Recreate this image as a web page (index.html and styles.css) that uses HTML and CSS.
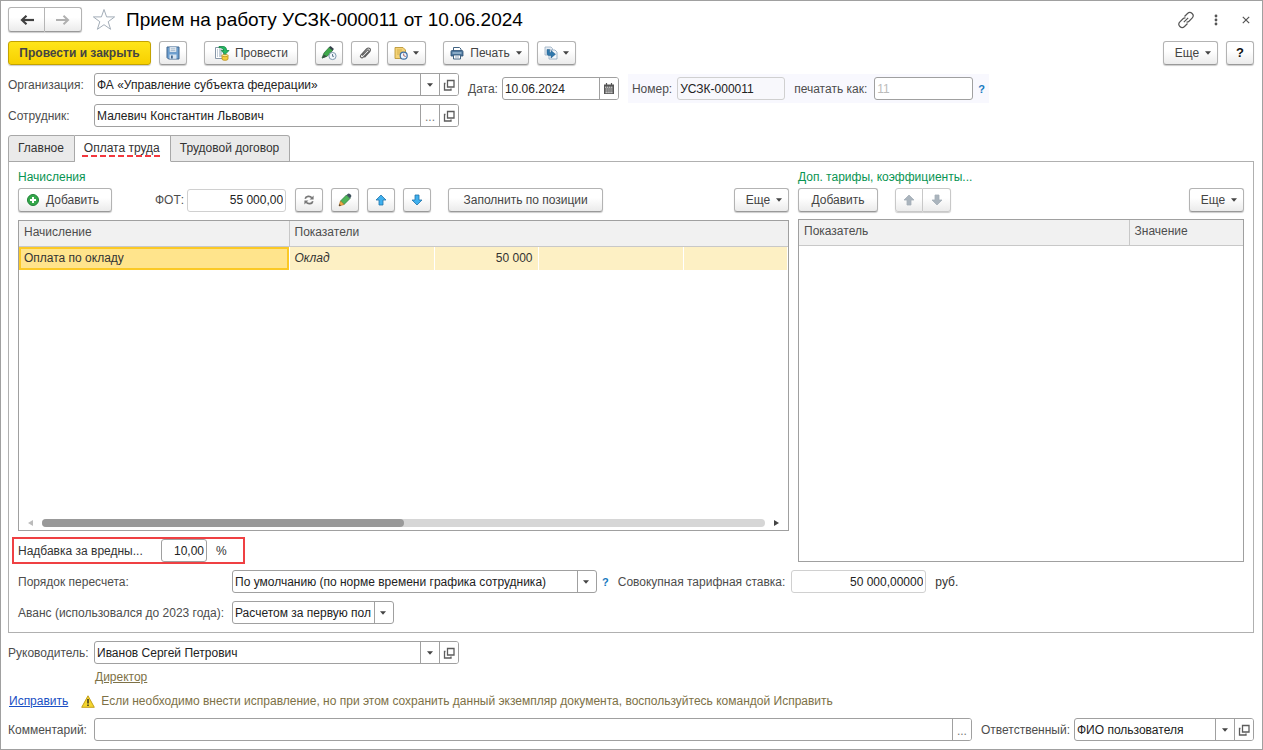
FILE: index.html
```html
<!DOCTYPE html>
<html lang="ru">
<head>
<meta charset="utf-8">
<meta name="viewport" content="width=device-width, initial-scale=1">
<title>Прием на работу УСЗК-000011 от 10.06.2024</title>
<link rel="stylesheet" href="styles.css">
</head>
<body>
<svg class="sprite" aria-hidden="true">
  <symbol id="caret" viewBox="0 0 7 4"><path d="M0 0h7L3.500 4z" fill="currentColor"/></symbol>
  <symbol id="open" viewBox="0 0 12 12"><path d="M4.500 1.500h6.500v6.500H4.500zM2.500 4.500H1.500V11H8V9.500" fill="none" stroke="#5c5c5c" stroke-width="1.300"/></symbol>
  <symbol id="up" viewBox="0 0 12 12"><path d="M6 1L11 6H8v5H4V6H1z" fill="currentColor" stroke="var(--edge)" stroke-width=".8" stroke-linejoin="round"/></symbol>
  <symbol id="down" viewBox="0 0 12 12"><path d="M6 11L1 6h3V1h4v5h3z" fill="currentColor" stroke="var(--edge)" stroke-width=".8" stroke-linejoin="round"/></symbol>
</svg>
<main class="window">
  <header class="title-row">
    <div class="pair nav">
      <button class="btn" aria-label="Назад"><svg width="14" height="10" viewBox="0 0 14 10"><path d="M14 5H3" stroke="#404040" stroke-width="2.200"/><path d="M6.500.8L2 5l4.500 4.200" fill="none" stroke="#404040" stroke-width="2.200"/></svg></button>
      <button class="btn" aria-label="Вперед"><svg width="14" height="10" viewBox="0 0 14 10"><path d="M0 5h11" stroke="#b0b0b0" stroke-width="2"/><path d="M7.500.8L12 5L7.500 9.200" fill="none" stroke="#b0b0b0" stroke-width="2"/></svg></button>
    </div>
    <button class="bare star" aria-label="В избранное"><svg width="24" height="23" viewBox="0 0 24 23"><path d="M12 1.500l2.600 7.400h8l-6.400 4.800 2.400 7.600L12 16.700l-6.600 4.600 2.400-7.600L1.400 8.900h8z" fill="#fff" stroke="#a3adb8"/></svg></button>
    <h1>Прием на работу УСЗК-000011 от 10.06.2024</h1>
    <div class="window-tools">
      <button class="bare" aria-label="Ссылка"><svg width="18" height="18" viewBox="0 0 18 18" fill="none" stroke="#555" stroke-width="1.200"><path d="M7.500 5.500L10.500 2.500a3.200 3.200 0 0 1 4.600 4.600L12 10.200a3 3 0 0 1-2.500.8M10.500 12.500l-3 3a3.200 3.200 0 0 1-4.600-4.600L6 7.800a3 3 0 0 1 2.500-.8M6.800 11.200l4.400-4.400"/></svg></button>
      <button class="bare" aria-label="Меню"><svg width="4" height="12" viewBox="0 0 4 12" fill="#555"><circle cx="2" cy="2" r="1.400"/><circle cx="2" cy="6" r="1.400"/><circle cx="2" cy="10" r="1.400"/></svg></button>
      <button class="bare" aria-label="Закрыть"><svg width="8" height="8" viewBox="0 0 8 8"><path d="M.8.8l6.400 6.400M7.200.8L.8 7.200" stroke="#555" stroke-width="1.200"/></svg></button>
    </div>
  </header>

  <div class="toolbar">
    <div class="group">
      <button class="btn primary">Провести и закрыть</button>
      <button class="btn icon" aria-label="Записать"><svg width="14" height="14" viewBox="0 0 14 14"><path d="M1 1h12v12H2.500L1 11.500z" fill="#6d9fd0" stroke="#41668f"/><path d="M3.500 1h7v5h-7z" fill="#fff" stroke="#7d9fc0" stroke-width=".6"/><path d="M4.500 2.800h5M4.500 4.300h5" stroke="#7190b0" stroke-width=".7"/><path d="M3.500 8.500h7v4.300h-7z" fill="#d8e4f0"/><path d="M5 9.500h1.800v3H5z" fill="#41668f"/></svg></button>
    </div>
    <div class="group">
      <button class="btn post"><svg width="16" height="16" viewBox="0 0 16 16"><path d="M1.500 2.500h8v11h-8z" fill="#fff" stroke="#8797a8"/><path d="M3 5h1M5 5h3M3 7h1M5 7h3M3 9h1M5 9h3M3 11h1M5 11h3" stroke="#7c93aa" stroke-width=".9"/><path d="M8 10.500v3.500c0 1.700 6 1.700 6 0v-3.500z" fill="#f5ce3c" stroke="#b88b16" stroke-width=".8"/><ellipse cx="11" cy="10.500" rx="3" ry="1.200" fill="#ffe98a" stroke="#b88b16" stroke-width=".7"/><path d="M5 1.500h4c2.500 0 3.500 1.500 3.500 4H15L11 9.500 7.300 5.500h2.200C9.500 3 7 2.800 5 2.800z" fill="#25ba62" stroke="#138243" stroke-width=".8"/></svg>Провести</button>
    </div>
    <div class="group">
      <button class="btn icon" aria-label="Подписать"><svg width="16" height="16" viewBox="0 0 16 16"><path d="M1 13l2-5 5.500-6L12 5 6.500 11z" fill="#3ea94a" stroke="#276a35" stroke-width=".7"/><path d="M8 2.500L9.500 1 13 4l-1.500 1.600z" fill="#34414b"/><path d="M1 13.500l1.800-4L6 11.500z" fill="#385044"/><circle cx="11.500" cy="11" r="3.600" fill="#f1f6fa" stroke="#7f99ae"/><path d="M11.500 9v2.300H13" fill="none" stroke="#557086" stroke-width=".9"/></svg></button>
      <button class="btn icon" aria-label="Файлы"><svg width="14" height="14" viewBox="0 0 14 14"><path d="M4.200 9.500l5-5.200c1-1 2.400.2 1.500 1.300l-5.400 5.600c-1.700 1.700-4-.3-2.400-2.200L8.500 3c2.300-2.300 5.300.2 3.300 2.600L6.500 11.300" fill="none" stroke="#5d5d5d" stroke-width="1.100"/></svg></button>
      <button class="btn menu-icon" aria-label="Напоминания"><svg width="14" height="14" viewBox="0 0 14 14"><path d="M1 1.500h8l2.500 2.500v8.500H1z" fill="#f5d376" stroke="#bb9738" stroke-width=".9"/><path d="M3 4h5M3 6h6M3 8h3" stroke="#cba844" stroke-width=".8"/><circle cx="9.700" cy="9.700" r="3.500" fill="#edf5fd" stroke="#3e6fa5" stroke-width="1.200"/><path d="M9.700 7.500v2.200l2 .8" fill="none" stroke="#a75f60"/></svg><svg class="caret"><use href="#caret"/></svg></button>
    </div>
    <div class="group">
      <button class="btn print"><svg width="14" height="14" viewBox="0 0 14 14"><path d="M3.500 5V1.500h6L11 3v2" fill="#fff" stroke="#416382"/><path d="M1 5.500q0-1 1-1h10q1 0 1 1V10H1z" fill="#4d789f" stroke="#2e5275" stroke-width=".8"/><path d="M2.500 7h9" stroke="#c6dced"/><path d="M3.500 9h7v4h-7z" fill="#fff" stroke="#416382"/><path d="M5 11h4" stroke="#96abc0"/></svg>Печать<svg class="caret"><use href="#caret"/></svg></button>
      <button class="btn menu-icon" aria-label="Создать на основании"><svg width="14" height="14" viewBox="0 0 14 14"><path d="M1 1h6l1.500 1.500V9H1z" fill="#e6edf4" stroke="#9aafc3" stroke-width=".8"/><path d="M5 4h6l2 2v7H5z" fill="#f5f8fb" stroke="#8ba4bc" stroke-width=".8"/><path d="M3 3.500h2.500V6.500H7V4.500L11.500 8.200L7 12V9.500H5Q3 9.500 3 7.500z" fill="#3079ad" stroke="#205b88" stroke-width=".5"/></svg><svg class="caret"><use href="#caret"/></svg></button>
    </div>
    <div class="group push">
      <button class="btn more">Еще<svg class="caret"><use href="#caret"/></svg></button>
      <button class="btn icon help" aria-label="Справка">?</button>
    </div>
  </div>

  <div class="head-fields">
    <div class="stack">
      <div class="row">
        <label class="caption" for="org">Организация:</label>
        <div class="field wide"><input id="org" value="ФА «Управление субъекта федерации»"><button aria-label="Выбрать"><svg class="caret"><use href="#caret"/></svg></button><button aria-label="Открыть"><svg class="open"><use href="#open"/></svg></button></div>
      </div>
      <div class="row">
        <label class="caption" for="emp">Сотрудник:</label>
        <div class="field wide"><input id="emp" value="Малевич Константин Львович"><button class="dots" aria-label="Выбрать">...</button><button aria-label="Открыть"><svg class="open"><use href="#open"/></svg></button></div>
      </div>
    </div>
    <div class="row date-row">
      <label for="date">Дата:</label>
      <div class="field date"><input id="date" value="10.06.2024"><button aria-label="Календарь"><svg width="10" height="11" viewBox="0 0 10 11"><path d="M0 1.500h10V11H0z" fill="#555"/><path d="M2.500 0v2.500M7.500 0v2.500" stroke="#555" stroke-width="1.200"/><path d="M1 4.200h8M1.500 6h7M1.500 8h7M1.500 9.700h7" stroke="#eee" stroke-dasharray="1.400 .5"/></svg></button></div>
    </div>
    <div class="number-box">
      <label for="num">Номер:</label>
      <div class="field readonly num"><input id="num" value="УСЗК-000011" readonly></div>
      <label class="print-as" for="printnum">печатать как:</label>
      <div class="field printnum"><input id="printnum" placeholder="11"></div>
      <button class="bare hint">?</button>
    </div>
  </div>

  <nav class="tabs" role="tablist">
    <button class="tab" role="tab">Главное</button>
    <button class="tab active" role="tab" aria-selected="true"><span>Оплата труда</span></button>
    <button class="tab" role="tab">Трудовой договор</button>
  </nav>

  <section class="panel">
    <div class="columns">
      <div class="column">
        <h2>Начисления</h2>
        <div class="toolbar inner">
          <button class="btn add"><svg width="12" height="12" viewBox="0 0 12 12"><circle cx="6" cy="6" r="5.500" fill="#35a84b" stroke="#218238"/><path d="M6 3v6M3 6h6" stroke="#fff" stroke-width="2"/></svg>Добавить</button>
          <div class="row fot"><label for="fot">ФОТ:</label><div class="field readonly plain fot-field"><input id="fot" class="num-value" value="55 000,00" readonly></div></div>
          <div class="group">
            <button class="btn icon" aria-label="Обновить"><svg width="10" height="10" viewBox="0 0 10 10"><path d="M1.200 3.800C1.800 1 6 .6 7.800 2.800M8.800 6.200C8.200 9 4 9.400 2.200 7.200" fill="none" stroke="#777" stroke-width="1.700"/><path d="M9.600.6v4H5.600zM.4 9.400v-4h4z" fill="#777"/></svg></button>
            <button class="btn icon" aria-label="Изменить"><svg width="14" height="14" viewBox="0 0 14 14"><path d="M2.500 8L8.500 2 12 5.500l-6 6z" fill="#4db558" stroke="#2f7c3e" stroke-width=".8"/><path d="M8.500 2L10 .7q1-.6 2 .4l1 1q.8 1 0 1.800L12 5.500z" fill="#41535e"/><path d="M1 13l1.500-5L6 11.500z" fill="#f5ab45" stroke="#b5772a" stroke-width=".7"/><path d="M1 13l.6-2L3 12.400z" fill="#333"/></svg></button>
            <button class="btn icon blue" aria-label="Вверх"><svg class="arrow"><use href="#up"/></svg></button>
            <button class="btn icon blue" aria-label="Вниз"><svg class="arrow"><use href="#down"/></svg></button>
          </div>
          <button class="btn fill">Заполнить по позиции</button>
          <button class="btn more push">Еще<svg class="caret"><use href="#caret"/></svg></button>
        </div>
        <div class="grid-box">
          <table class="accruals">
            <colgroup><col class="c-name"><col class="c-ind"><col class="c-val"><col class="c-ind"><col></colgroup>
            <thead><tr><th>Начисление</th><th colspan="4">Показатели</th></tr></thead>
            <tbody><tr><td class="selected">Оплата по окладу</td><td class="italic">Оклад</td><td class="amount">50 000</td><td></td><td></td></tr></tbody>
          </table>
          <div class="scroll">
            <svg width="5" height="6" viewBox="0 0 5 6"><path d="M5 0v6L0 3z" fill="#bbb"/></svg>
            <div class="track"><div class="thumb"></div></div>
            <svg width="5" height="6" viewBox="0 0 5 6"><path d="M0 0v6l5-3z" fill="#444"/></svg>
          </div>
        </div>
        <div class="bonus">
          <label for="bonus">Надбавка за вредны...</label>
          <div class="field bonus-field"><input id="bonus" class="num-value" value="10,00"></div>
          <span>%</span>
        </div>
      </div>
      <div class="column">
        <h2>Доп. тарифы, коэффициенты...</h2>
        <div class="toolbar inner">
          <button class="btn add-plain">Добавить</button>
          <div class="pair muted"><button class="btn icon" aria-label="Вверх" disabled><svg class="arrow"><use href="#up"/></svg></button><button class="btn icon" aria-label="Вниз" disabled><svg class="arrow"><use href="#down"/></svg></button></div>
          <button class="btn more push">Еще<svg class="caret"><use href="#caret"/></svg></button>
        </div>
        <div class="grid-box rates-box">
          <table class="rates">
            <colgroup><col><col class="c-rate"></colgroup>
            <thead><tr><th>Показатель</th><th>Значение</th></tr></thead>
          </table>
        </div>
      </div>
    </div>
    <div class="row calc">
      <label class="long" for="recalc">Порядок пересчета:</label>
      <div class="field recalc"><select id="recalc"><option>По умолчанию (по норме времени графика сотрудника)</option></select><svg class="caret"><use href="#caret"/></svg></div>
      <button class="bare hint">?</button>
      <label class="rate-label" for="rate">Совокупная тарифная ставка:</label>
      <div class="field readonly plain rate"><input id="rate" class="num-value" value="50 000,00000" readonly></div>
      <span class="unit">руб.</span>
    </div>
    <div class="row calc">
      <label class="long" for="advance">Аванс (использовался до 2023 года):</label>
      <div class="field advance"><select id="advance"><option>Расчетом за первую пол</option></select><svg class="caret"><use href="#caret"/></svg></div>
    </div>
  </section>

  <footer>
    <div class="row">
      <label class="caption" for="boss">Руководитель:</label>
      <div class="field wide"><input id="boss" value="Иванов Сергей Петрович"><button aria-label="Выбрать"><svg class="caret"><use href="#caret"/></svg></button><button aria-label="Открыть"><svg class="open"><use href="#open"/></svg></button></div>
    </div>
    <a class="position" href="#">Директор</a>
    <div class="row notice">
      <a href="#">Исправить</a>
      <svg width="14" height="13" viewBox="0 0 14 13"><path d="M7 .8L13.300 12.300H.7z" fill="#f4d52f" stroke="#c3a01b" stroke-linejoin="round"/><path d="M7 4v4.500M7 9.500v1.500" stroke="#4b4420" stroke-width="1.700"/></svg>
      <span>Если необходимо внести исправление, но при этом сохранить данный экземпляр документа, воспользуйтесь командой Исправить</span>
    </div>
    <div class="row">
      <label class="caption" for="comment">Комментарий:</label>
      <div class="field comment"><input id="comment"><button class="dots" aria-label="Выбрать">...</button></div>
      <label class="resp" for="resp">Ответственный:</label>
      <div class="field resp-field"><input id="resp" value="ФИО пользователя"><button aria-label="Выбрать"><svg class="caret"><use href="#caret"/></svg></button><button aria-label="Открыть"><svg class="open"><use href="#open"/></svg></button></div>
    </div>
  </footer>
</main>
</body>
</html>
```

FILE: styles.css
```css
* { box-sizing: border-box; }
body {
  margin: 0;
  background: #fff;
  color: #4d4d4d;
  font: 12px/16px "Liberation Sans", Arial, sans-serif;
}
button, input, select { font: inherit; color: inherit; }
svg { display: block; flex: none; }
.sprite { position: absolute; width: 0; height: 0; }
.window {
  min-height: 100vh;
  display: flex;
  flex-direction: column;
  border: 1px solid #a0a0a0;
  padding: 6px 8px 8px 7px;
}

/* buttons */
.btn {
  height: 24px;
  padding: 0 12px;
  display: flex;
  align-items: center;
  justify-content: center;
  white-space: nowrap;
  border: 1px solid #b3b3b3;
  border-bottom-color: #999;
  border-radius: 3px;
  background: linear-gradient(#fff 40%, #ebebeb);
  box-shadow: 0 1px 1px #ccc;
  color: #444;
}
.btn.icon { width: 28px; padding: 0; }
.primary {
  width: 143px;
  padding: 0;
  background: linear-gradient(#ffe51a, #f7d000);
  border-color: #c4a300;
  font-weight: bold;
}
.help { font-weight: bold; font-size: 13px; color: #111; }
.post { width: 94px; padding: 0; gap: 5px; }
.menu-icon { width: 39px; padding: 0; gap: 5px; }
.print { width: 86px; padding: 0; gap: 6px; }
.more { width: 55px; padding: 0 0 0 5px; gap: 6px; }
.add { width: 94px; padding: 0 4px 0 0; gap: 7px; }
.add-plain { width: 80px; padding: 0; }
.fill { width: 155px; padding: 0; }
.bare { border: 0; background: none; padding: 0; }
.caret { width: 6px; height: 4px; color: #444; }
.open { width: 12px; height: 12px; }
.arrow { width: 12px; height: 12px; }
.blue { color: #3fb0ee; --edge: #2274a8; }
.muted { --edge: #a5afb8; }
.muted .btn { color: #aab4bd; border-color: #c8c8c8; }
.pair { display: flex; }
.pair .btn:first-child { border-radius: 3px 0 0 3px; }
.pair .btn:last-child { border-radius: 0 3px 3px 0; border-left: 0; }

/* title */
.title-row { display: flex; align-items: center; }
.nav .btn { width: 37px; height: 25px; padding: 0; }
.star { margin: 0 10px 0 10px; }
h1 { margin: 0; font-size: 19px; line-height: 24px; font-weight: normal; color: #000; }
.window-tools { margin-left: auto; padding-right: 4px; display: flex; align-items: center; gap: 24px; }
.window-tools .bare:first-child { margin-right: -5px; }

/* toolbars */
.toolbar { display: flex; gap: 17px; margin-top: 9px; }
.group { display: flex; gap: 8px; }
.push { margin-left: auto; }

/* fields */
.row { display: flex; align-items: center; }
.row label, .number-box label { white-space: nowrap; }
.caption { width: 86px; flex: none; }
.field {
  position: relative;
  height: 23px;
  display: flex;
  flex: none;
  border: 1px solid #a0a0a0;
  border-radius: 3px;
  background: #fff;
  color: #222;
  overflow: hidden;
}
.field input, .field select {
  flex: 1;
  min-width: 0;
  width: 100%;
  border: 0;
  padding: 0 2px;
  background: none;
  outline: 0;
}
.field select { appearance: none; padding-right: 20px; }
.field > .caret { position: absolute; right: 7px; top: 9px; pointer-events: none; }
.field:has(select)::after { content: ""; position: absolute; right: 18px; top: 0; bottom: 0; border-left: 1px solid #a0a0a0; }
.field button {
  width: 19px;
  flex: none;
  padding: 0;
  display: flex;
  align-items: center;
  justify-content: center;
  border: 0;
  border-left: 1px solid #a0a0a0;
  background: #fff;
}
.field .dots { padding-top: 3px; color: #777; }
.field ::placeholder { color: #bbb; opacity: 1; }
.readonly { border-color: #d0d0d0; background: #f8f8fc; }
.plain { background: #fff; }
.field .num-value { text-align: right; }
.wide { width: 365px; }
.hint { color: #1679c0; font-weight: bold; font-size: 11px; }

.head-fields { display: flex; align-items: flex-start; margin-top: 8px; }
.stack { display: flex; flex-direction: column; gap: 8px; }
.date-row { margin: 4px 0 0 9px; gap: 4px; }
.date { width: 117px; }
.number-box { margin: 1px 0 0 9px; padding: 3px 4px; display: flex; align-items: center; background: #f8f8fe; }
.number-box .num { width: 108px; margin: 0 9px 0 5px; }
.number-box .printnum { width: 99px; margin: 0 5px 0 7px; }

/* tabs */
.tabs { display: flex; margin-top: 8px; position: relative; z-index: 1; }
.tab {
  height: 27px;
  margin-bottom: -1px;
  padding: 0 10px 2px 9px;
  border: 1px solid #a8a8a8;
  border-left-width: 0;
  background: #eaeaea;
  color: #333;
}
.tab:first-child { border-left-width: 1px; border-radius: 3px 0 0 0; }
.tab:last-child { border-radius: 0 3px 0 0; }
.tab.active { background: #fff; border-bottom-color: #fff; }
.tab.active span {
  padding: 0 2px 2px;
  margin: 0 -2px;
  background: repeating-linear-gradient(90deg, #f3383e 0 6px, transparent 6px 9px) bottom / 100% 2px no-repeat;
}

/* panel */
.panel {
  flex: 1;
  display: flex;
  flex-direction: column;
  gap: 8px;
  border: 1px solid #b0b0b0;
  padding: 7px 9px 8px;
}
.columns { flex: 1; display: grid; grid-template-columns: 771fr 446fr; gap: 9px; }
.column { display: flex; flex-direction: column; min-width: 0; }
h2 { margin: 0; font-size: 12px; line-height: 16px; font-weight: normal; color: #089452; }
.inner { margin-top: 3px; gap: 17px; }
.fot { gap: 3px; margin: 0 -8px 0 26px; }
.fot-field { width: 99px; }
.grid-box {
  flex: 1;
  margin-top: 8px;
  display: flex;
  flex-direction: column;
  border: 1px solid #a0a0a0;
}
.rates-box { margin-top: 7px; }
table { width: 100%; table-layout: fixed; border-collapse: collapse; }
th {
  height: 25px;
  padding: 0 5px 2px;
  text-align: left;
  font-weight: normal;
  background: #f1f1f1;
  border-bottom: 1px solid #c8c8c8;
}
th + th { border-left: 1px solid #c8c8c8; }
td { height: 24px; padding: 0 5px; background: #fdf0c4; color: #333; border: 1px solid #fff; border-left-width: 0; }
td.selected { background: #ffe48c; box-shadow: inset 0 0 0 2px #fbc926; }
.italic { font-style: italic; }
.amount { text-align: right; }
.c-name { width: 270px; }
.c-ind { width: 145px; }
.c-val { width: 104px; }
.c-rate { width: 114px; }
.scroll { margin-top: auto; padding: 0 9px 3px; display: flex; align-items: center; justify-content: space-between; gap: 9px; }
.track { flex: 1; height: 8px; border-radius: 4px; background: #d6d6d6; }
.thumb { width: 50%; height: 8px; border-radius: 4px; background: #999; }
.bonus {
  align-self: flex-start;
  display: flex;
  align-items: center;
  width: 229px;
  margin: 8px 0 0 -4px;
  padding-left: 4px;
  outline: 2px solid #ef4043;
  color: #333;
}
.bonus label { width: 143px; }
.bonus-field { width: 46px; margin-right: 9px; }
.long { width: 214px; }
.recalc { width: 365px; }
.advance { width: 162px; }
.calc .hint { margin: 0 9px 0 5px; }
.rate { width: 135px; margin: 0 9px 0 6px; }
.unit { color: #333; }

/* footer */
footer { margin-top: 8px; display: flex; flex-direction: column; }
a { color: #1a4fc4; }
footer .position { align-self: flex-start; margin: 5px 0 0 87px; color: #7d7146; }
.notice { margin: 8px 0 9px 1px; gap: 6px; }
.notice a { margin-right: 7px; }
.notice span { color: #7d7146; }
.comment { flex: 1; }
.resp { margin: 0 4px 0 9px; }
.resp-field { width: 180px; }
```
